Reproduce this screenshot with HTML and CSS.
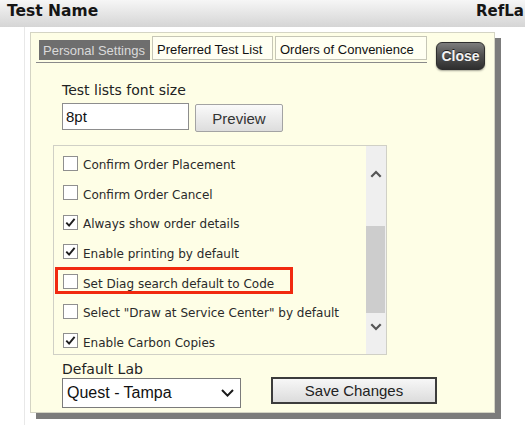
FILE: index.html
```html
<!DOCTYPE html>
<html>
<head>
<meta charset="utf-8">
<link rel="stylesheet" href="styles.css">
</head>
<body>
<div class="header"><span class="h-first">Test Name</span><span class="h-second">RefLa</span></div>
<div class="content">
  <div class="panel">
    <div class="top-row">
      <div class="tabs">
        <div class="tab active">Personal Settings</div>
        <div class="tab t2">Preferred Test List</div>
        <div class="tab t3">Orders of Convenience</div>
      </div>
      <button class="close">Close</button>
    </div>
    <div class="label l1">Test lists font size</div>
    <div class="font-row">
      <div class="input">8pt</div>
      <button class="preview">Preview</button>
    </div>
    <div class="listbox">
      <div class="items">
        <div class="item"><span class="cb"></span><span class="txt">Confirm Order Placement</span></div>
        <div class="item"><span class="cb"></span><span class="txt">Confirm Order Cancel</span></div>
        <div class="item"><span class="cb"><svg width="13" height="13" viewBox="0 0 13 13"><path d="M2.3 6.6 L5.1 9.6 L10.6 2.8" fill="none" stroke="#1e1e1e" stroke-width="1.9"/></svg></span><span class="txt">Always show order details</span></div>
        <div class="item"><span class="cb"><svg width="13" height="13" viewBox="0 0 13 13"><path d="M2.3 6.6 L5.1 9.6 L10.6 2.8" fill="none" stroke="#1e1e1e" stroke-width="1.9"/></svg></span><span class="txt">Enable printing by default</span></div>
        <div class="item"><span class="cb"></span><span class="txt">Set Diag search default to Code</span><span class="mark"></span></div>
        <div class="item"><span class="cb"></span><span class="txt">Select "Draw at Service Center" by default</span></div>
        <div class="item"><span class="cb"><svg width="13" height="13" viewBox="0 0 13 13"><path d="M2.3 6.6 L5.1 9.6 L10.6 2.8" fill="none" stroke="#1e1e1e" stroke-width="1.9"/></svg></span><span class="txt">Enable Carbon Copies</span></div>
      </div>
      <div class="scrollbar">
        <div class="sb-btn sb-up"><svg width="12" height="8" viewBox="0 0 12 8"><path d="M1.3 6.8 L6 2 L10.7 6.8" fill="none" stroke="#555" stroke-width="2.2"/></svg></div>
        <div class="sb-thumb"></div>
        <div class="sb-btn sb-down"><svg width="12" height="8" viewBox="0 0 12 8"><path d="M1.3 1.2 L6 6 L10.7 1.2" fill="none" stroke="#555" stroke-width="2.2"/></svg></div>
      </div>
    </div>
    <div class="label l2">Default Lab</div>
    <div class="bottom-row">
      <div class="select"><span>Quest - Tampa</span><svg width="13" height="8" viewBox="0 0 13 8"><path d="M1 1 L6.5 6.6 L12 1" fill="none" stroke="#1a1a1a" stroke-width="2"/></svg></div>
      <button class="save">Save Changes</button>
    </div>
  </div>
</div>
</body>
</html>
```
FILE: styles.css
```css
html, body {
  margin: 0;
  padding: 0;
  background: #ffffff;
  font-family: "DejaVu Sans", sans-serif;
  overflow: hidden;
}

.header {
  height: 27px;
  box-sizing: border-box;
  padding: 2px 0 0 7px;
  line-height: 25px;
  background: linear-gradient(#f6f6f6, #d5d5d5);
  display: flex;
  overflow: hidden;
  white-space: nowrap;
  font: bold 15.5px "DejaVu Sans", sans-serif;
  color: #151515;
}

.h-first {
  flex: 0 0 469px;
}

.h-second {
  flex: none;
  font-size: 15px;
}

.content {
  margin-left: 24px;
  border-left: 1px solid #e8e8e8;
  padding: 5px 0 0 5px;
  height: 398px;
  box-sizing: border-box;
}

.panel {
  width: 465px;
  height: 381px;
  box-sizing: border-box;
  border: 1px solid #d4d4c4;
  background: #fefee6;
  box-shadow: 6px 6px 0 #7c7c7c;
}

.top-row {
  display: flex;
  align-items: flex-start;
}

.tabs {
  margin: 3px 0 0 5px;
  width: 391px;
  box-sizing: border-box;
  padding: 0 0 2px 3px;
  border-bottom: 1px solid #8a8a8a;
  display: flex;
  align-items: flex-end;
  gap: 2px;
}

.tab {
  font: 13px "Liberation Sans", sans-serif;
  box-sizing: border-box;
  white-space: nowrap;
  padding-left: 4px;
}

.tab.active {
  width: 111px;
  height: 20px;
  padding-top: 1px;
  line-height: 19px;
  background: #6e6e6e;
  color: #dadada;
}

.tab.t2,
.tab.t3 {
  height: 24px;
  padding-top: 3px;
  line-height: 20px;
  border: 1px solid #c6c6b6;
  background: #fffff2;
  color: #111111;
}

.tab.t2 {
  width: 121px;
}

.tab.t3 {
  width: 152px;
}

button {
  margin: 0;
  padding: 0;
  font-family: "Liberation Sans", sans-serif;
}

.close {
  margin: 9px 0 0 9px;
  width: 49px;
  height: 28px;
  border: 1px solid #2e2e2e;
  border-radius: 6px;
  background: linear-gradient(#7d7d7d 0%, #525252 45%, #2e2e2e 100%);
  color: #f2f2f2;
  font-weight: bold;
  font-size: 14px;
  text-shadow: 0 -1px 0 #222;
  box-shadow: 0 1px 2px rgba(0, 0, 0, 0.35);
}

.label {
  margin-left: 31px;
  font-size: 14px;
  color: #222222;
}

.l1 {
  margin-top: 12px;
  line-height: 17px;
}

.font-row {
  display: flex;
  align-items: flex-start;
  gap: 6px;
  margin: 4px 0 0 31px;
}

.input {
  width: 127px;
  height: 27px;
  box-sizing: border-box;
  border: 1px solid #8d8d8d;
  background: #ffffff;
  padding-left: 3px;
  font: 15px "Liberation Sans", sans-serif;
  line-height: 25px;
  color: #111111;
}

.preview {
  margin-top: 1px;
  width: 88px;
  height: 28px;
  border: 1px solid #a3a3a3;
  border-radius: 2px;
  background: linear-gradient(#fafafa, #dddddd);
  font-size: 15px;
  color: #333333;
}

.listbox {
  margin: 13px 0 0 22px;
  width: 334px;
  height: 210px;
  box-sizing: border-box;
  border: 1px solid #d0d0c6;
  display: flex;
  overflow: hidden;
}

.items {
  flex: 1;
  padding-top: 2.2px;
  overflow: hidden;
}

.item {
  position: relative;
  height: 29.67px;
  display: flex;
  align-items: center;
  gap: 5px;
  padding-left: 9px;
  font-size: 12px;
  color: #2a2a2a;
  white-space: nowrap;
}

.txt {
  padding-top: 4px;
}

.cb {
  flex: none;
  width: 15px;
  height: 15px;
  box-sizing: border-box;
  border: 1px solid #8f8f8f;
  background: #ffffff;
  display: flex;
  align-items: center;
  justify-content: center;
}

.mark {
  position: absolute;
  left: 1px;
  top: 0;
  width: 238px;
  height: 27px;
  box-sizing: border-box;
  border: 3px solid #f1290f;
}

.scrollbar {
  flex: none;
  width: 20px;
  background: #efefef;
  display: flex;
  flex-direction: column;
}

.sb-btn {
  height: 16px;
  display: flex;
  align-items: center;
  justify-content: center;
}

.sb-up {
  margin-top: 20px;
}

.sb-thumb {
  margin-top: 44px;
  height: 87px;
  width: 19px;
  background: #cdcdcd;
}

.sb-down {
  margin-top: 6px;
}

.l2 {
  margin-top: 6px;
  line-height: 16px;
}

.bottom-row {
  display: flex;
  align-items: flex-start;
  gap: 30px;
  margin-left: 31px;
}

.select {
  margin-top: 1px;
  width: 179px;
  height: 30px;
  box-sizing: border-box;
  border: 1px solid #7b7b7b;
  background: #ffffff;
  display: flex;
  align-items: center;
  justify-content: space-between;
  padding: 0 6px 0 4px;
  font: 16px "Liberation Sans", sans-serif;
  color: #111111;
}

.save {
  width: 166px;
  height: 27px;
  border: 2px solid #3c3c3c;
  background: linear-gradient(#f7f7f7, #dcdcdc);
  font-size: 15px;
  color: #222222;
}
```
